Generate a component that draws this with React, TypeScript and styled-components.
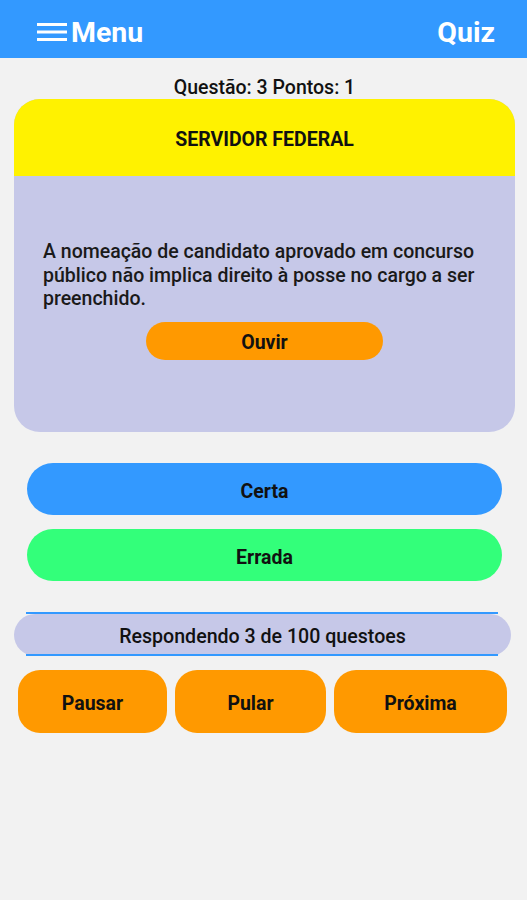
import React from 'react';
import styled, { createGlobalStyle } from 'styled-components';

const GlobalStyle = createGlobalStyle`
  body {
    margin: 0;
    background-color: #f2f2f2;
    font-family: Roboto, 'Noto Sans', sans-serif;
  }
`;

const Screen = styled.div`
  width: 527px;
  min-height: 900px;
  background-color: #f2f2f2;
`;

const Header = styled.header`
  height: 58px;
  background-color: #3399ff;
  display: flex;
  align-items: center;
  justify-content: space-between;
  padding: 6px 32px 0 37px;
  color: white;
  box-sizing: border-box;
`;

const Brand = styled.div`
  display: flex;
  align-items: center;
  gap: 4px;
  font-size: 28.5px;
  font-weight: 700;
`;

const HeaderTitle = styled.div`
  font-size: 28.5px;
  font-weight: 700;
`;

const Score = styled.div`
  text-align: center;
  font-size: 19.5px;
  font-weight: 500;
  color: #111;
  padding: 18px 0 0 2px;
  height: 41px;
  box-sizing: border-box;
`;

const Card = styled.section`
  margin: 0 12px 0 14px;
  height: 333px;
  border-radius: 26px;
  overflow: hidden;
  background-color: #c6c8e8;
  display: flex;
  flex-direction: column;
`;

const CardHead = styled.div`
  height: 77px;
  background-color: #fff200;
  display: flex;
  align-items: center;
  justify-content: center;
  font-size: 19.5px;
  font-weight: 700;
  color: #111;
  padding-top: 4px;
  box-sizing: border-box;
`;

const CardBody = styled.div`
  padding: 64px 29px 0 29px;
  display: flex;
  flex-direction: column;
`;

const Question = styled.p`
  margin: 0;
  font-size: 19.5px;
  font-weight: 500;
  line-height: 23.5px;
  color: #1a1a1a;
`;

const PillButton = styled.button<{ $bg: string; $w?: string; $h: number; $r: number }>`
  width: ${(p) => p.$w || '100%'};
  height: ${(p) => p.$h}px;
  border: none;
  border-radius: ${(p) => p.$r}px;
  background-color: ${(p) => p.$bg};
  font-family: Roboto, sans-serif;
  font-size: 19.5px;
  font-weight: 700;
  color: #111;
  padding: 4px 0 0 0;
  cursor: pointer;
`;

const ListenRow = styled.div`
  display: flex;
  justify-content: center;
  margin-top: 11px;
`;

const Answers = styled.div`
  display: flex;
  flex-direction: column;
  gap: 14px;
  margin: 31px 25px 0 27px;
`;

const Progress = styled.div`
  margin: 33px 16px 0 14px;
  position: relative;
  height: 42px;
  display: flex;
  align-items: center;
  justify-content: center;
  background-color: #c6c8e8;
  border-radius: 22px;
  font-size: 19.6px;
  font-weight: 500;
  color: #111;
  padding-top: 2px;
  box-sizing: border-box;

  &::before,
  &::after {
    content: '';
    position: absolute;
    left: 12px;
    right: 13px;
    height: 2px;
    background-color: #3399ff;
  }
  &::before {
    top: -2px;
  }
  &::after {
    bottom: 0;
  }
`;

const Controls = styled.div`
  display: grid;
  grid-template-columns: 149px 151px 173px;
  gap: 8px;
  margin: 14px 20px 0 18px;
`;

const MenuIcon = () => (
  <svg width="30" height="20" viewBox="0 0 30 20">
    <rect x="0" y="1" width="30" height="3" fill="white" />
    <rect x="0" y="8.5" width="30" height="3" fill="white" />
    <rect x="0" y="16" width="30" height="3" fill="white" />
  </svg>
);

const App: React.FC = () => {
  return (
    <Screen>
      <GlobalStyle />
      <Header>
        <Brand>
          <MenuIcon />
          <span>Menu</span>
        </Brand>
        <HeaderTitle>Quiz</HeaderTitle>
      </Header>
      <Score>Questão: 3 Pontos: 1</Score>
      <Card>
        <CardHead>SERVIDOR FEDERAL</CardHead>
        <CardBody>
          <Question>
            A nomeação de candidato aprovado em concurso público não implica direito à posse no cargo a ser
            preenchido.
          </Question>
          <ListenRow>
            <PillButton $bg="#ff9900" $w="237px" $h={38} $r={19}>
              Ouvir
            </PillButton>
          </ListenRow>
        </CardBody>
      </Card>
      <Answers>
        <PillButton $bg="#3399ff" $h={52} $r={26}>
          Certa
        </PillButton>
        <PillButton $bg="#33ff7a" $h={52} $r={26}>
          Errada
        </PillButton>
      </Answers>
      <Progress>Respondendo 3 de 100 questoes</Progress>
      <Controls>
        <PillButton $bg="#ff9900" $h={63} $r={22}>
          Pausar
        </PillButton>
        <PillButton $bg="#ff9900" $h={63} $r={22}>
          Pular
        </PillButton>
        <PillButton $bg="#ff9900" $h={63} $r={22}>
          Próxima
        </PillButton>
      </Controls>
    </Screen>
  );
};

export default App;
